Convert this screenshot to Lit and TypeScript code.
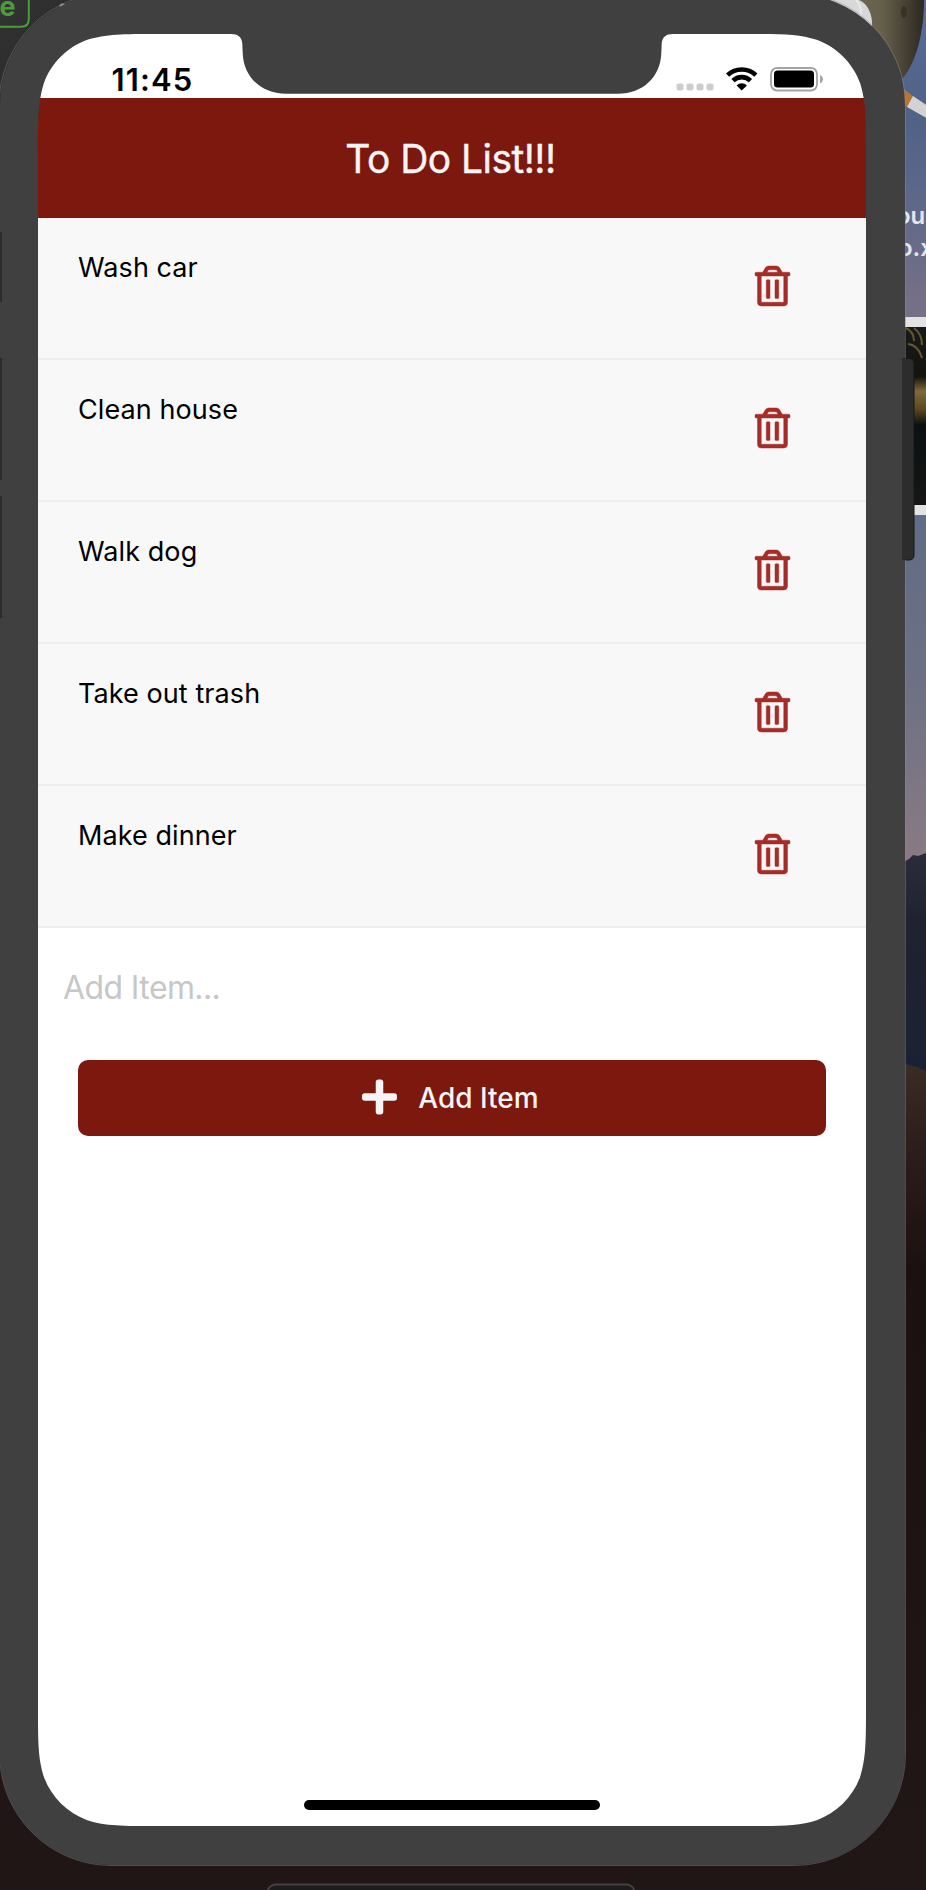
import { LitElement, html, svg, css } from "lit";
import { customElement, property, state } from "lit/decorators.js";

@customElement("todo-row")
class TodoRow extends LitElement {
  @property() label = "";

  static styles = css`
    :host { display: block; }
    .row {
      box-sizing: border-box;
      height: 142px;
      display: flex;
      justify-content: space-between;
      align-items: flex-start;
      padding: 33px 76.5px 0 40px;
      background: #f8f8f8;
      border-bottom: 2px solid #eeeeee;
    }
    .label { font-size: 27px; line-height: 34px; letter-spacing: 0.08px; color: #000; white-space: nowrap; }
    .trash {
      display: block;
      width: 35px;
      height: 40px;
      margin-top: 15px;
      fill: #a52d28;
      stroke: #a52d28;
      stroke-width: 6px;
      overflow: visible;
      cursor: pointer;
    }
  `;

  private remove() {
    this.dispatchEvent(new CustomEvent("remove"));
  }

  render() {
    return html`
      <div class="row">
        <span class="label">${this.label}</span>
        <svg class="trash" viewBox="0 0 448 512" @click=${this.remove}>
          <path d="M268 416h24a12 12 0 0 0 12-12V188a12 12 0 0 0-12-12h-24a12 12 0 0 0-12 12v216a12 12 0 0 0 12 12zM432 80h-82.41l-34-56.7A48 48 0 0 0 274.41 0H173.59a48 48 0 0 0-41.16 23.3L98.41 80H16A16 16 0 0 0 0 96v16a16 16 0 0 0 16 16h16v336a48 48 0 0 0 48 48h288a48 48 0 0 0 48-48V128h16a16 16 0 0 0 16-16V96a16 16 0 0 0-16-16zM171.84 50.91A6 6 0 0 1 177 48h94a6 6 0 0 1 5.15 2.91L293.61 80H154.39zM368 464H80V128h288zm-212-48h24a12 12 0 0 0 12-12V188a12 12 0 0 0-12-12h-24a12 12 0 0 0-12 12v216a12 12 0 0 0 12 12z"/>
        </svg>
      </div>`;
  }
}

// Rounded rectangle with continuous-curvature corners.
function squircle(x0: number, y0: number, x1: number, y1: number, r: number): string {
  const corner = (cx: number, cy: number, ux: number, uy: number, vx: number, vy: number) => {
    const p = (a: number, b: number) =>
      `${(cx + ux * a * r + vx * b * r).toFixed(2)} ${(cy + uy * a * r + vy * b * r).toFixed(2)}`;
    return (
      `L${p(1.5287, 0)}C${p(1.0885, 0)} ${p(0.8684, 0)} ${p(0.6315, 0.0749)}` +
      `C${p(0.3728, 0.1691)} ${p(0.1691, 0.3728)} ${p(0.0749, 0.6315)}` +
      `C${p(0, 0.8684)} ${p(0, 1.0885)} ${p(0, 1.5287)}`
    );
  };
  return (
    `M${(x0 + x1) / 2} ${y0}` +
    corner(x1, y0, -1, 0, 0, 1) +
    corner(x1, y1, 0, -1, -1, 0) +
    corner(x0, y1, 1, 0, 0, -1) +
    corner(x0, y0, 0, 1, 1, 0) +
    "Z"
  );
}

@customElement("app-root")
class AppRoot extends LitElement {
  @state() private items = ["Wash car", "Clean house", "Walk dog", "Take out trash", "Make dinner"];

  static styles = css`
    :host {
      display: block;
      position: relative;
      width: 926px;
      height: 1890px;
      overflow: hidden;
      font-family: Inter, "Liberation Sans", sans-serif;
    }
    .layer { position: absolute; inset: 0; width: 926px; height: 1890px; display: block; pointer-events: none; }
    .screen {
      position: relative;
      box-sizing: border-box;
      width: 828px;
      height: 1792px;
      margin: 34px 0 0 38px;
      background: #fff;
      display: flex;
      flex-direction: column;
    }
    .frame { display: flow-root; }
    .status {
      height: 64px;
      box-sizing: border-box;
      flex: none;
      display: flex;
      justify-content: space-between;
      padding: 28px 43px 0 73.5px;
    }
    .time { font-size: 31px; font-weight: 600; line-height: 36px; letter-spacing: 1.1px; color: #000; }
    .signals { display: block; width: 150px; height: 30px; margin-top: 2px; }
    .header {
      flex: none;
      height: 120px;
      box-sizing: border-box;
      padding: 1px 3px 0 0;
      background: #7d180f;
      color: #f5f5f5;
      display: flex;
      align-items: center;
      justify-content: center;
    }
    .title { font-size: 39px; line-height: 48px; letter-spacing: -0.55px; white-space: nowrap; -webkit-text-stroke: 0.4px #f5f5f5; }
    .entry { flex: none; height: 132px; box-sizing: border-box; padding: 35px 24px 0; }
    .input {
      display: block;
      width: 100%;
      height: 50px;
      box-sizing: border-box;
      border: 0;
      padding: 0 0 0 1px;
      outline: none;
      background: transparent;
      font: 400 32px/50px Inter, "Liberation Sans", sans-serif;
      letter-spacing: -0.6px;
      color: #000;
    }
    .input::placeholder { color: #c7c7c7; opacity: 1; }
    .add {
      flex: none;
      height: 76px;
      margin: 0 40px;
      border: 0;
      border-radius: 10px;
      padding: 0 3px 3px 0;
      background: #7d180f;
      color: #f5f5f5;
      display: flex;
      align-items: center;
      justify-content: center;
      gap: 21px;
      font: 500 28px/34px Inter, "Liberation Sans", sans-serif;
    }
    .caption { padding-top: 2px; }
    .plus { width: 35px; height: 40px; fill: #f5f5f5; display: block; }
    .home { width: 296px; height: 10px; border-radius: 5px; background: #000; margin: auto auto 16px; }
    .filename { font: 600 24px Inter, sans-serif; fill: #e6e6e8; }
    .badge { font: 700 27px Inter, sans-serif; fill: #4a9e37; }
  `;

  private add() {
    const input = this.renderRoot.querySelector<HTMLInputElement>(".input");
    if (input && input.value.trim()) {
      this.items = [...this.items, input.value.trim()];
      input.value = "";
    }
  }

  private desktop() {
    return svg`
      <defs>
        <linearGradient id="sky" x1="0" y1="0" x2="0" y2="1">
          <stop offset="0" stop-color="#5a6c99"/>
          <stop offset="0.13" stop-color="#506287"/>
          <stop offset="0.22" stop-color="#5c678a"/>
          <stop offset="0.35" stop-color="#767086"/>
          <stop offset="0.6" stop-color="#606c85"/>
          <stop offset="0.8" stop-color="#6f7184"/>
          <stop offset="1" stop-color="#8b7b83"/>
        </linearGradient>
        <linearGradient id="ridge" x1="0" y1="0" x2="0" y2="1">
          <stop offset="0" stop-color="#2b2c3b"/>
          <stop offset="0.3" stop-color="#20232f"/>
          <stop offset="1" stop-color="#1a2034"/>
        </linearGradient>
        <linearGradient id="dune" x1="0" y1="0" x2="0" y2="1">
          <stop offset="0" stop-color="#3c2c25"/>
          <stop offset="0.12" stop-color="#2a1c1a"/>
          <stop offset="0.25" stop-color="#1c1111"/>
          <stop offset="1" stop-color="#221717"/>
        </linearGradient>
        <linearGradient id="ink" x1="0" y1="0" x2="1" y2="0">
          <stop offset="0" stop-color="#777059"/>
          <stop offset="0.6" stop-color="#665f4c"/>
          <stop offset="1" stop-color="#2d2920"/>
        </linearGradient>
        <linearGradient id="corner" x1="0" y1="0" x2="1" y2="1">
          <stop offset="0" stop-color="#343434"/>
          <stop offset="1" stop-color="#202020"/>
        </linearGradient>
        <linearGradient id="photo" x1="0" y1="0" x2="0" y2="1">
          <stop offset="0" stop-color="#18191b"/>
          <stop offset="0.28" stop-color="#15140f"/>
          <stop offset="0.36" stop-color="#7d6a3c"/>
          <stop offset="0.46" stop-color="#5b4a22"/>
          <stop offset="0.55" stop-color="#0b1010"/>
          <stop offset="1" stop-color="#161616"/>
        </linearGradient>
      </defs>
      <rect width="926" height="1890" fill="#201616"/>
      <rect x="860" width="66" height="870" fill="url(#sky)"/>
      <path d="M860 866L905 861L909 859L913 855L918 856L926 853V1080H860Z" fill="url(#ridge)"/>
      <path d="M860 1058L905 1064Q916 1066 926 1071V1890H860Z" fill="url(#dune)"/>
      <path d="M820 0H924C924 30 917 62 902 79L860 60Z" fill="url(#ink)"/>
      <ellipse cx="904" cy="12" rx="3" ry="6" fill="#37322a"/>
      <path d="M820 0H859C868 4 873 14 872 29L850 25Z" fill="#d8d8d8"/>
      <path d="M856 0C862 6 862 14 859 19" fill="none" stroke="#e8e8e8" stroke-width="2"/>
      <path d="M900 86L914 97L908 107L896 102Z" fill="#b57636"/>
      <path d="M913 96L928 106V119L907 107Z" fill="#d3d3d3"/>
      <text class="filename" x="896" y="224">ou</text>
      <text class="filename" x="898" y="256">o.x</text>
      <rect x="890" y="317" width="36" height="198" fill="#e4e3e4"/>
      <rect x="890" y="327" width="36" height="178" fill="url(#photo)"/>
      <path d="M906 328Q914 332 914 341M914 328Q922 334 922 345M908 344Q918 345 922 358" fill="none" stroke="#66562f" stroke-width="2"/>
      <rect width="110" height="110" fill="url(#corner)"/>
      <path d="M-5 26.8H21Q28.8 26.8 28.8 19V-5" fill="none" stroke="#4a9e37" stroke-width="2"/>
      <text class="badge" x="-0.5" y="15.5">e</text>
      <circle cx="62.5" cy="6.5" r="3" fill="#999"/>
      <rect x="267.5" y="1884.5" width="367" height="20" rx="8" fill="#1c1c1e" stroke="#454042" stroke-width="2"/>
    `;
  }

  private bezel() {
    const body = "M111 -6H794A111 111 0 0 1 905 105V1754A111 111 0 0 1 794 1865H111A111 111 0 0 1 0 1754V105A111 111 0 0 1 111 -6Z";
    return svg`
      <path d="M902 358.500H909Q914 358.500 914 363.500V555Q914 560 909 560H902Z" fill="#2c2c2c" stroke="#161616"/>
      <path d="${body}${squircle(38, 34, 866, 1826, 78)}" fill="#404040" fill-rule="evenodd"/>
      <path d="M-1 1754V105A112 112 0 0 1 111 -7H794A111.500 111.500 0 0 1 905.500 105V1754A111.500 111.500 0 0 1 794 1865.500H111A112 112 0 0 1 -0.500 1754" fill="none" stroke="#8a8a8e" stroke-opacity="0.45"/>
      <path d="M231 33V34C238 34 242 37 242.300 44L242.700 53C243.500 77 261 93.700 286 93.700H618C643 93.700 660.500 77 661.300 53L661.700 44C662 37 666 34 673 34V33Z" fill="#404040"/>
      <path d="M902 358H906V560H902Z" fill="#2c2c2c"/>
      <path d="M0 232H2V302H0ZM0 358H2V480H0ZM0 496H2V618H0Z" fill="#2c2c2c"/>
    `;
  }

  render() {
    return html`
      <svg class="layer" viewBox="0 0 926 1890">${this.desktop()}</svg>
      <div class="frame">
        <div class="screen">
          <div class="status">
            <span class="time">11:45</span>
            <svg class="signals" viewBox="673 64 150 30">
              <g fill="#cdcdcd">
                <rect x="676.500" y="83.500" width="7" height="7" rx="2"/>
                <rect x="686.500" y="83.500" width="7" height="7" rx="2"/>
                <rect x="696.500" y="83.500" width="7" height="7" rx="2"/>
                <rect x="706.500" y="83.500" width="7" height="7" rx="2"/>
              </g>
              <g fill="none" stroke="#000" stroke-width="4.600">
                <path d="M727.600 75.200A20.500 20.500 0 0 1 755.900 75.200"/>
                <path d="M733 80.700A12.500 12.500 0 0 1 750.500 80.700"/>
              </g>
              <path d="M741.750 90.500L736.600 85.400A7.500 7.500 0 0 1 746.900 85.400Z"/>
              <rect x="771" y="68" width="46" height="22.500" rx="6" fill="none" stroke="#a3a3a3" stroke-width="1.800"/>
              <rect x="774" y="70.500" width="40" height="17" rx="3.500"/>
              <path d="M820 75Q823 76.500 823 79.200Q823 82 820 83.500Z" fill="#a3a3a3"/>
            </svg>
          </div>
          <div class="header"><span class="title">To Do List!!!</span></div>
          ${this.items.map(
            (item) => html`<todo-row .label=${item} @remove=${() => (this.items = this.items.filter((i) => i !== item))}></todo-row>`
          )}
          <div class="entry"><input class="input" placeholder="Add Item..." /></div>
          <button class="add" @click=${this.add}>
            <svg class="plus" viewBox="0 0 448 512">
              <path d="M416 208H272V64c0-17.670-14.330-32-32-32h-32c-17.670 0-32 14.330-32 32v144H32c-17.670 0-32 14.330-32 32v32c0 17.670 14.330 32 32 32h144v144c0 17.670 14.330 32 32 32h32c17.670 0 32-14.330 32-32V304h144c17.670 0 32-14.330 32-32v-32c0-17.670-14.330-32-32-32z"/>
            </svg>
            <span class="caption">Add Item</span>
          </button>
          <div class="home"></div>
        </div>
      </div>
      <svg class="layer" viewBox="0 0 926 1890">${this.bezel()}</svg>
    `;
  }
}
